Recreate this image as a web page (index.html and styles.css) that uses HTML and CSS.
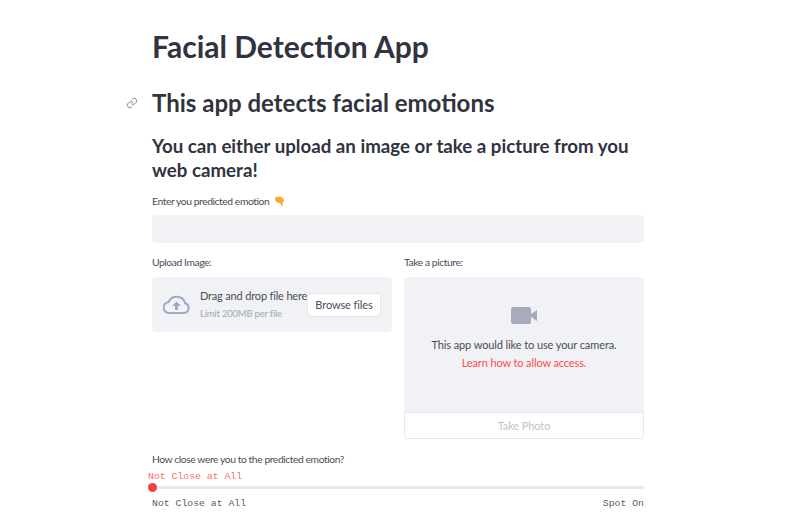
FILE: index.html
```html
<!DOCTYPE html>
<html>
<head>
  <title>Facial Detection App</title>
  <link rel="stylesheet" href="styles.css">
</head>
<body>
  <div class="container">
    <h1>Facial Detection App</h1>
    <h2>
      <svg class="anchor" viewBox="0 0 24 24" width="12" height="12" fill="none" stroke="#8a8c98" stroke-width="2" stroke-linecap="round" stroke-linejoin="round">
        <path d="M10 13a5 5 0 0 0 7.500.5l3-3a5 5 0 0 0-7-7l-1.700 1.700"></path>
        <path d="M14 11a5 5 0 0 0-7.500-.5l-3 3a5 5 0 0 0 7 7l1.700-1.700"></path>
      </svg>
      This app detects facial emotions
    </h2>
    <h3>You can either upload an image or take a picture from you web camera!</h3>

    <label class="field-label">Enter you predicted emotion
      <svg class="emoji" viewBox="0 0 12 12" width="11" height="11">
        <path fill="#f8ac2e" d="M1 2.500 3 .8h4l3 1.700.8 3-1.300 1.500-.2 3.500q-.9 1-1.800 0l-.5-2.700-3-.6-2.500-2z"></path>
        <path fill="#ee9a1c" d="M3.500 5.200h6v.7h-6z"></path>
      </svg>
    </label>
    <div class="text-input"></div>

    <div class="columns">
      <div class="column">
        <label class="field-label">Upload Image:</label>
        <div class="uploader">
          <svg class="cloud" viewBox="0 0 27 19" width="27" height="19">
            <path fill="none" stroke="#a0a8c4" stroke-width="2" d="M6.500 18h14.500a5 5 0 0 0 1.200-9.700A8.800 8.800 0 0 0 5.700 7 5.500 5.500 0 0 0 6.500 18z"></path>
            <path fill="#a0a8c4" d="M13.500 6.500l4.500 4.500h-3v4h-3v-4h-3z"></path>
          </svg>
          <div class="upload-text">
            <div class="upload-title">Drag and drop file here</div>
            <div class="upload-limit">Limit 200MB per file</div>
          </div>
          <button class="browse-button">Browse files</button>
        </div>
      </div>
      <div class="column">
        <label class="field-label">Take a picture:</label>
        <div class="camera">
          <svg class="camera-icon" viewBox="0 0 26 17" width="26" height="17">
            <rect x="0" y="0" width="20" height="17" rx="2" fill="#a9abbd"></rect>
            <path fill="#a9abbd" d="M20 7l6-4v11l-6-4z"></path>
          </svg>
          <div class="camera-text">This app would like to use your camera.</div>
          <a class="camera-link">Learn how to allow access.</a>
        </div>
        <button class="photo-button">Take Photo</button>
      </div>
    </div>

    <label class="field-label slider-label">How close were you to the predicted emotion?</label>
    <div class="slider">
      <div class="slider-value">Not Close at All</div>
      <div class="slider-track"><span class="slider-thumb"></span></div>
      <div class="slider-ticks">
        <span>Not Close at All</span>
        <span>Spot On</span>
      </div>
    </div>
  </div>
</body>
</html>
```

FILE: styles.css
```css
html, body {
  height: 516px;
  overflow: hidden;
}

body {
  font-family: Lato, Arial, sans-serif;
  background-color: #ffffff;
  color: #31333f;
  margin: 0;
  padding: 0;
}

.container {
  width: 492px;
  margin-left: 152px;
  padding-top: 26px;
}

h1 {
  font-size: 30px;
  line-height: 40px;
  font-weight: 700;
  margin: 0 0 20px 0;
}

h2 {
  position: relative;
  font-size: 24px;
  line-height: 34px;
  font-weight: 700;
  margin: 0 0 14px 0;
}

.anchor {
  position: absolute;
  left: -26px;
  top: 11px;
}

h3 {
  font-size: 18.700px;
  line-height: 24px;
  font-weight: 700;
  margin: 0 0 11px 0;
}

.field-label {
  display: block;
  font-size: 10.300px;
  letter-spacing: -0.42px;
  line-height: 16px;
  margin-bottom: 6px;
  color: #4a4c58;
}

.emoji {
  vertical-align: -2px;
  margin-left: 2px;
}

.text-input {
  height: 28px;
  background-color: #f0f2f6;
  border-radius: 4px;
  margin-bottom: 11px;
}

.columns {
  display: flex;
  gap: 12px;
  margin-bottom: 12px;
}

.columns .field-label {
  margin-bottom: 7px;
}

.column {
  width: 240px;
}

.uploader {
  display: flex;
  align-items: center;
  height: 55px;
  padding: 0 11px;
  box-sizing: border-box;
  background-color: #f0f2f6;
  border-radius: 4px;
}

.cloud {
  flex: none;
  margin-right: 10px;
}

.upload-text {
  flex: 1;
  min-width: 0;
  white-space: nowrap;
}

.upload-title {
  font-size: 11px;
  letter-spacing: -0.17px;
  line-height: 18px;
  color: #4a4c58;
}

.upload-limit {
  font-size: 9.500px;
  letter-spacing: -0.2px;
  line-height: 16px;
  margin-top: 1px;
  color: #a3a8b8;
}

.browse-button {
  flex: none;
  width: 74px;
  height: 24px;
  padding: 0;
  font-family: inherit;
  font-size: 11px;
  letter-spacing: -0.1px;
  color: #4a4c58;
  background-color: #ffffff;
  border: 1px solid #e6e7ea;
  border-radius: 4px;
}

.camera {
  display: flex;
  flex-direction: column;
  align-items: center;
  height: 135px;
  padding-top: 30px;
  box-sizing: border-box;
  background-color: #f0f2f6;
  border-radius: 4px 4px 0 0;
}

.camera-icon {
  margin-bottom: 12px;
}

.camera-text {
  font-size: 11px;
  letter-spacing: -0.1px;
  line-height: 18px;
  color: #4a4c58;
}

.camera-link {
  font-size: 11px;
  letter-spacing: -0.12px;
  line-height: 18px;
  color: #ff4b4b;
}

.photo-button {
  display: block;
  width: 100%;
  height: 27px;
  padding: 0;
  font-family: inherit;
  font-size: 11px;
  letter-spacing: -0.1px;
  color: #c0c2c8;
  background-color: #ffffff;
  border: 1px solid #e6e7ea;
  border-radius: 0 0 4px 4px;
}

.slider-label {
  margin-bottom: 3px;
}

.slider {
  font-family: "Liberation Mono", monospace;
  font-size: 9.800px;
}

.slider-value {
  line-height: 14px;
  margin-left: -4px;
  color: #ff6b6b;
}

.slider-track {
  position: relative;
  height: 3px;
  margin: 2px 0 8px 0;
  background-color: #e8e9ee;
  border-radius: 2px;
}

.slider-thumb {
  position: absolute;
  left: -4px;
  top: -3px;
  width: 9px;
  height: 9px;
  background-color: #f04040;
  border-radius: 50%;
}

.slider-ticks {
  display: flex;
  justify-content: space-between;
  line-height: 14px;
  color: #5a5c68;
}
```
